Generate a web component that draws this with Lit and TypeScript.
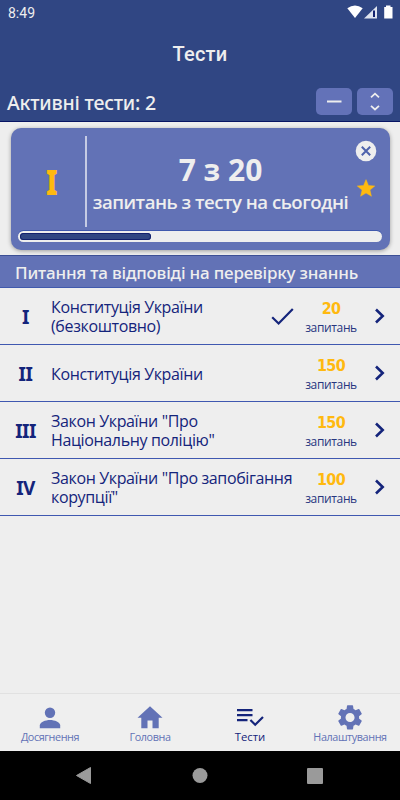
import { LitElement, html, css, svg } from "lit";
import { customElement, property } from "lit/decorators.js";

interface Test {
  num: string;
  lines: string[];
  count: number;
  done?: boolean;
}

const TESTS: Test[] = [
  { num: "I", lines: ["Конституція України", "(безкоштовно)"], count: 20, done: true },
  { num: "II", lines: ["Конституція України"], count: 150 },
  { num: "III", lines: ['Закон України "Про', 'Національну поліцію"'], count: 150 },
  { num: "IV", lines: ['Закон України "Про запобігання', 'корупції"'], count: 100 },
];

@customElement("test-row")
export class TestRow extends LitElement {
  @property({ attribute: false }) test!: Test;

  static styles = css`
    :host {
      display: grid;
      grid-template-columns: 51px minmax(0, 1fr) 30px 62px 38px;
      align-items: center;
      height: 57px;
      box-sizing: border-box;
      border-bottom: 1px solid #3f58b0;
      color: #14247b;
    }
    .num { text-align: center; font-family: "Noto Sans", sans-serif; font-size: 19px; font-weight: 700; line-height: 24px; letter-spacing: -0.5px; padding-top: 2px; }
    .name { font-size: 16px; line-height: 19px; letter-spacing: -0.36px; white-space: nowrap; padding-top: 2px; }
    .line { display: block; }
    .mark { height: 24px; }
    .count { text-align: center; }
    .value { font-family: "DejaVu Sans Condensed", "DejaVu Sans", sans-serif; font-stretch: condensed; font-size: 16px; letter-spacing: -0.7px; line-height: 19px; font-weight: 700; color: #ffb90f; padding-top: 3px; }
    .unit { font-size: 12px; line-height: 17px; letter-spacing: -0.35px; padding-top: 1px; color: #27367f; }
    .go { height: 24px; }
    svg { display: block; fill: none; stroke: #14247b; }
  `;

  render() {
    const t = this.test;
    return html`
      <div class="num">${t.num}</div>
      <div class="name">${t.lines.map((l) => html`<span class="line">${l}</span>`)}</div>
      <div class="mark">
        ${t.done
          ? html`<svg width="30" height="24" viewBox="0 0 30 24"><path d="M2.2 13.3 8.6 19.5 22.8 5" stroke-width="2.2"/></svg>`
          : ""}
      </div>
      <div class="count">
        <div class="value">${t.count}</div>
        <div class="unit">запитань</div>
      </div>
      <div class="go">
        <svg width="38" height="24" viewBox="0 0 38 24"><path d="M14 5.5 20.7 12 14 18.5" stroke-width="2.6"/></svg>
      </div>
    `;
  }
}

@customElement("app-root")
export class AppRoot extends LitElement {
  static styles = css`
    :host {
      display: flex;
      flex-direction: column;
      width: 400px;
      height: 800px;
      overflow: hidden;
      background: #eeeeee;
      font-family: "Open Sans", "Noto Sans", sans-serif;
    }
    svg { display: block; }
    .top { height: 122px; box-sizing: border-box; background: #304683; border-bottom: 1px solid #071463; color: #eeeeee; display: flex; flex-direction: column; }
    .status { height: 26px; display: flex; justify-content: space-between; padding-left: 8px; font: 14px/26px Roboto, sans-serif; }
    .title { height: 57px; text-align: center; font: 500 20px/56px Roboto, sans-serif; letter-spacing: 0.2px; }
    .bar { flex: 1; display: flex; align-items: flex-start; gap: 5px; padding: 5px 7px 0; }
    .active { flex: 1; font-family: "Noto Sans", sans-serif; font-size: 19.5px; line-height: 29px; letter-spacing: -0.2px; font-weight: 500; white-space: nowrap; }
    .btn { width: 36px; height: 27px; border-radius: 5px; background: #6372b8; }
    .card { margin: 6px 10.5px 0; height: 122px; box-sizing: border-box; border-radius: 10px; background: #6272b6; box-shadow: 0 1px 4px rgba(0, 0, 0, 0.35); display: flex; flex-direction: column; color: #eeeeee; padding: 8px 7.5px 0; }
    .main { height: 91px; display: flex; }
    .roman { width: 67px; border-right: 2px solid #c5cbe4; text-align: center; color: #ffb90f; font-family: "Noto Sans", sans-serif; font-size: 35px; font-weight: 900; line-height: 91px; }
    .glyph { display: inline-block; transform: scaleX(0.75); }
    .info { width: 267px; text-align: center; white-space: nowrap; }
    .big { font-size: 30px; line-height: 36px; font-weight: 700; padding-top: 16px; }
    .sub { font-size: 18.6px; line-height: 28px; letter-spacing: -0.5px; font-weight: 600; }
    .side { width: 24px; display: flex; flex-direction: column; align-items: center; gap: 15px; padding-top: 4px; }
    .track { margin-top: 4px; height: 11px; box-sizing: border-box; border-radius: 6px; padding: 2px; background: #eeeeee; box-shadow: 0 -1px #4059ad; }
    .fill { height: 7px; border-radius: 4px; background: #304683; box-shadow: inset 0 0 0 1px #13216e; }
    .section { margin-top: 5px; height: 33px; box-sizing: border-box; border-top: 1px solid #3c4f95; border-bottom: 1px solid #4059ad; background: #6272b6; color: #eeeeee; font-family: "Noto Sans", sans-serif; font-size: 17px; letter-spacing: -0.19px; font-weight: 500; line-height: 33px; padding-left: 15px; white-space: nowrap; }
    .list { flex: 1; }
    .tabs { height: 58px; box-sizing: border-box; border-top: 1px solid #e1e1e1; display: grid; grid-template-columns: repeat(4, 100px); color: #6272b6; background: #efefef; }
    .tab { display: flex; flex-direction: column; align-items: center; padding-top: 8px; font-size: 10.8px; line-height: 13px; letter-spacing: -0.4px; white-space: nowrap; }
    .tab.on { color: #14247b; font-size: 11.3px; letter-spacing: 0; }
    .sys { height: 49px; background: #000; }
  `;

  private tab(icon: unknown, label: string, on = false) {
    return html`<div class="tab ${on ? "on" : ""}">
      <svg width="32" height="28" viewBox="0 0 32 28" fill="currentColor">${icon}</svg>${label}
    </div>`;
  }

  render() {
    const progress = (7 / 20) * 100 + 1.4;
    return html`
      <div class="top">
        <div class="status">
          <span>8:49</span>
          <svg width="60" height="26" viewBox="0 0 60 26" fill="#fff">
            <path d="M7.3 8.3Q15 2.8 22.7 8.3L15 18Z" />
            <path d="M24 18.5 37 6V18.5Z" fill="#dfe4ef" />
            <path d="M33 10.5H35V17H33Z" fill="#13216e" />
            <path d="M44.2 7H46V5.5H50.5V7H52.5V18.5H44.2Z" />
          </svg>
        </div>
        <div class="title">Тести</div>
        <div class="bar">
          <div class="active">Активні тести: 2</div>
          <div class="btn">
            <svg width="36" height="27" viewBox="0 0 36 27"><path d="M11 13.5H25.5" stroke="#eee" stroke-width="2" /></svg>
          </div>
          <div class="btn">
            <svg width="36" height="27" viewBox="0 0 36 27" fill="none" stroke="#eee" stroke-width="1.8"><path d="M14 9.3 18 5.7 22 9.3M14 17.9 18 21.5 22 17.9" /></svg>
          </div>
        </div>
      </div>
      <div class="card">
        <div class="main">
          <div class="roman"><span class="glyph">I</span></div>
          <div class="info">
            <div class="big">7 з 20</div>
            <div class="sub">запитань з тесту на сьогодні</div>
          </div>
          <div class="side">
            <svg width="22" height="22" viewBox="0 0 22 22"><circle cx="11" cy="11" r="10.3" fill="#eee" /><path d="M6.8 6.8 15.2 15.2M15.2 6.8 6.8 15.2" stroke="#4e62ac" stroke-width="2" /></svg>
            <svg width="22" height="22" viewBox="0 0 24 24" fill="#ffb90f" stroke="#ffb90f" stroke-width="0.5" stroke-linejoin="round"><path d="M12 17.27 18.18 21l-1.64-7.03L22 9.24l-7.19-.61L12 2 9.19 8.63 2 9.24l5.46 4.73L5.82 21z" transform="translate(.5 .9) scale(.96)" /></svg>
          </div>
        </div>
        <div class="track"><div class="fill" style="width:${progress}%"></div></div>
      </div>
      <div class="section">Питання та відповіді на перевірку знаннь</div>
      <div class="list">${TESTS.map((t) => html`<test-row .test=${t}></test-row>`)}</div>
      <div class="tabs">
        ${this.tab(svg`<circle cx="16" cy="10.7" r="5.2"/><path d="M5.8 26.2V23.5C5.8 20.2 11.5 18 16 18S26.2 20.2 26.2 23.5V26.2Z"/>`, "Досягнення")}
        ${this.tab(svg`<path d="M16 4.3 28.5 15.7H24.7V26.2H18.5V18.5H13.5V26.2H7.3V15.7H3.5Z"/>`, "Головна")}
        ${this.tab(svg`<path d="M3 7H18.5V9.2H3ZM3 12H18.5V14.2H3ZM3 17H13.5V19.2H3Z"/><path d="M16.4 18 21.2 22.8 29 15" fill="none" stroke="currentColor" stroke-width="2.2"/>`, "Тести", true)}
        ${this.tab(svg`<path transform="translate(.9 .3) scale(1.26)" d="M19.14 12.94c.04-.3.06-.61.06-.94 0-.32-.02-.64-.07-.94l2.03-1.58c.18-.14.23-.41.12-.61l-1.92-3.32c-.12-.22-.37-.29-.59-.22l-2.39.96c-.5-.38-1.03-.7-1.62-.94l-.36-2.54c-.04-.24-.24-.41-.48-.41h-3.84c-.24 0-.43.17-.47.41l-.36 2.54c-.59.24-1.13.57-1.62.94l-2.39-.96c-.22-.08-.47 0-.59.22L2.74 8.87c-.12.21-.08.47.12.61l2.03 1.58c-.05.3-.09.63-.09.94s.02.64.07.94l-2.03 1.58c-.18.14-.23.41-.12.61l1.92 3.32c.12.22.37.29.59.22l2.39-.96c.5.38 1.03.7 1.62.94l.36 2.54c.05.24.24.41.48.41h3.84c.24 0 .44-.17.47-.41l.36-2.54c.59-.24 1.13-.56 1.62-.94l2.39.96c.22.08.47 0 .59-.22l1.92-3.32c.12-.22.07-.47-.12-.61l-2.01-1.58zM12 15.6c-1.98 0-3.6-1.62-3.6-3.6s1.62-3.6 3.6-3.6 3.6 1.62 3.6 3.6-1.62 3.6-3.6 3.6z"/>`, "Налаштування")}
      </div>
      <div class="sys">
        <svg width="400" height="49" viewBox="0 0 400 49" fill="#9a9a9a">
          <path d="M76.5 24.5 90.5 16.5V32.5Z" stroke="#9a9a9a" stroke-linejoin="round" />
          <circle cx="200" cy="24.5" r="7.5" />
          <rect x="307" y="17" width="16" height="16" rx="1" />
        </svg>
      </div>
    `;
  }
}
